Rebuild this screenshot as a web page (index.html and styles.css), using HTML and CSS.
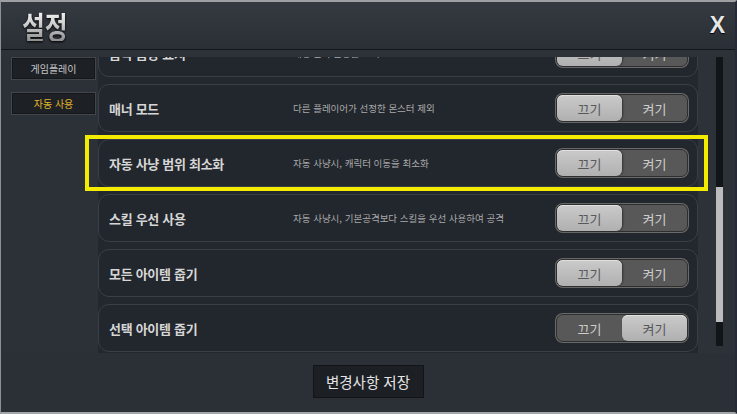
FILE: index.html
```html
<!DOCTYPE html>
<html lang="ko">
<head>
    <meta charset="UTF-8">
    <title>설정</title>
    <link rel="stylesheet" href="styles.css">
</head>
<body>
    <div class="frame">
        <!-- 상단 타이틀 -->
        <header class="top">
            <h1 class="title">설정</h1>
            <span class="close">X</span>
        </header>

        <div class="main">
            <!-- 왼쪽 탭 -->
            <nav class="side">
                <div class="tab">게임플레이</div>
                <div class="tab on">자동 사용</div>
            </nav>

            <!-- 설정 목록 -->
            <div class="list">
                <div class="rows">
                    <div class="row">
                        <span class="name">음악 음량 표시</span>
                        <span class="desc">배경 음악 음량을 표시</span>
                        <div class="toggle"><span class="on">끄기</span><span>켜기</span></div>
                    </div>
                    <div class="row">
                        <span class="name">매너 모드</span>
                        <span class="desc">다른 플레이어가 선정한 몬스터 제외</span>
                        <div class="toggle"><span class="on">끄기</span><span>켜기</span></div>
                    </div>
                    <div class="row marked">
                        <span class="name">자동 사냥 범위 최소화</span>
                        <span class="desc">자동 사냥시, 캐릭터 이동을 최소화</span>
                        <div class="toggle"><span class="on">끄기</span><span>켜기</span></div>
                    </div>
                    <div class="row">
                        <span class="name">스킬 우선 사용</span>
                        <span class="desc">자동 사냥시, 기본공격보다 스킬을 우선 사용하여 공격</span>
                        <div class="toggle"><span class="on">끄기</span><span>켜기</span></div>
                    </div>
                    <div class="row">
                        <span class="name">모든 아이템 줍기</span>
                        <span class="desc"></span>
                        <div class="toggle"><span class="on">끄기</span><span>켜기</span></div>
                    </div>
                    <div class="row">
                        <span class="name">선택 아이템 줍기</span>
                        <span class="desc"></span>
                        <div class="toggle"><span>끄기</span><span class="on">켜기</span></div>
                    </div>
                </div>
            </div>

            <div class="bar"><div class="thumb"></div></div>
        </div>

        <footer class="foot">
            <button class="save">변경사항 저장</button>
        </footer>
    </div>
</body>
</html>
```

FILE: styles.css
```css
body {
    margin: 0;
    background: #2c3037;
    font-family: "Noto Sans CJK KR", "Noto Sans", sans-serif;
}
.frame {
    width: 737px;
    height: 414px;
    box-sizing: border-box;
    border-top: 2px solid #9d9fa3;
    border-left: 1px solid #8e9094;
    border-right: 2px solid #262a38;
    border-bottom: 2px solid #a3a5a8;
    background: #2c3037;
    display: flex;
    flex-direction: column;
}
.top {
    height: 48px;
    box-sizing: border-box;
    border-bottom: 1px solid #14161a;
    background: linear-gradient(#353940, #2a2e35);
    display: flex;
    align-items: center;
    justify-content: space-between;
    padding: 0 10px 0 21px;
}
.title {
    margin: 0;
    font-size: 31px;
    font-weight: bold;
    line-height: 1;
    transform: scaleX(0.8);
    transform-origin: left center;
    background: linear-gradient(#fafafa, #c4c4c4 55%, #8e8e8e);
    -webkit-background-clip: text;
    background-clip: text;
    color: transparent;
    filter: drop-shadow(0 1px 1px #000);
}
.close {
    font-family: "Liberation Sans", Arial, sans-serif;
    font-size: 23px;
    font-weight: bold;
    color: #e6e6e6;
    text-shadow: 0 1px 1px #000;
}
.main {
    height: 303px;
    box-sizing: border-box;
    padding-top: 7px;
    background: #2d3138;
    display: flex;
}
.side {
    width: 97px;
    box-sizing: border-box;
    padding-left: 10px;
    display: flex;
    flex-direction: column;
    gap: 12px;
    background: #2c3037;
}
.tab {
    width: 85px;
    height: 23px;
    box-sizing: border-box;
    background: #1d2025;
    border: 1px solid #41454c;
    box-shadow: inset 0 0 0 1px #15171a;
    color: #c4c4c4;
    font-size: 10px;
    display: flex;
    align-items: center;
    justify-content: center;
}
.tab.on {
    color: #e2b52c;
}
.list {
    width: 600px;
    height: 296px;
    background: #23272e;
    clip-path: inset(0 -20px 0 -20px);
}
.rows {
    margin-top: -28px;
    display: flex;
    flex-direction: column;
    gap: 7px;
}
.row {
    position: relative;
    height: 48px;
    box-sizing: border-box;
    padding: 0 9px 0 10px;
    background: #22262d;
    border: 1px solid #3a3e45;
    border-radius: 11px;
    display: flex;
    align-items: center;
}
.row.marked::after {
    content: "";
    position: absolute;
    left: -14px;
    right: -11px;
    top: -5px;
    bottom: -5px;
    border: 4px solid #f4ec00;
}
.name {
    width: 184px;
    flex-shrink: 0;
    color: #d6d6d6;
    font-size: 13px;
    font-weight: bold;
    letter-spacing: -0.3px;
}
.desc {
    flex: 1;
    color: #a9a9a9;
    font-size: 9.5px;
}
.toggle {
    width: 132px;
    height: 28px;
    box-sizing: border-box;
    border: 1px solid #2e2e2e;
    border-radius: 7px;
    background: #585858;
    box-shadow: 0 0 0 1px #6a6a6a;
    display: flex;
    font-size: 13px;
}
.toggle span {
    flex: 1;
    display: flex;
    align-items: center;
    justify-content: center;
    color: #cdcdcd;
}
.toggle span.on {
    background: linear-gradient(#cacaca, #b0b0b0);
    border-radius: 6px;
    color: #585858;
    box-shadow: inset 0 1px 0 #e0e0e0, 1px 0 2px #333;
}
.bar {
    width: 7px;
    height: 289px;
    margin-left: 18px;
    background: #121518;
    position: relative;
}
.thumb {
    position: absolute;
    left: 0;
    right: 0;
    top: 130px;
    height: 135px;
    background: #bcbcbc;
}
.foot {
    flex: 1;
    display: flex;
    justify-content: center;
    align-items: flex-start;
    padding-top: 12px;
    background: #2b2f36;
}
.save {
    width: 111px;
    height: 33px;
    background: #1c1f24;
    border: 1px solid #121417;
    color: #e4e4e4;
    font-family: "Noto Sans CJK KR", sans-serif;
    font-size: 14.5px;
    padding: 0;
}
```
